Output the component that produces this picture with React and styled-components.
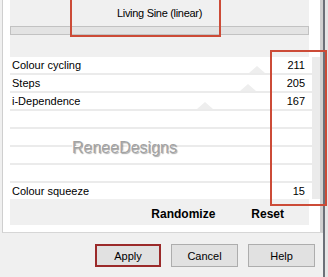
import React from 'react';
import styled, { createGlobalStyle } from 'styled-components';

const GlobalStyle = createGlobalStyle`
  html, body {
    margin: 0;
    padding: 0;
    background: #f0f0f0;
  }
  body {
    font-family: "Liberation Sans", Arial, sans-serif;
    font-size: 11px;
    color: #000;
  }
`;

const Screen = styled.div`
  position: relative;
  width: 328px;
  height: 277px;
  display: flex;
  overflow: hidden;
  background: #f0f0f0;
`;

const Main = styled.div`
  width: 323px;
  display: flex;
  flex-direction: column;
`;

const Edge = styled.div`
  width: 5px;
  background: linear-gradient(to right, #6c7078 0 2px, #e6e6e6 2px);
`;

const Frame = styled.div`
  height: 233px;
  box-sizing: border-box;
  margin-left: 2px;
  padding: 0 11px 7px 7px;
  background: #fff;
  border-left: 1px solid #cfcfcf;
  border-right: 3px solid #d0d0d0;
  border-bottom: 1px solid #d6d6d6;
`;

const Panel = styled.div`
  height: 225px;
  display: flex;
  flex-direction: column;
  background: #f0f0f0;
`;

const Title = styled.div`
  padding-top: 6px;
  line-height: 14px;
  text-align: center;
  letter-spacing: -0.3px;
`;

const Bar = styled.div`
  margin-top: 6px;
  height: 9px;
  box-sizing: border-box;
  border: 1px solid #c2c2c2;
  background: #e3e3e3;
`;

const List = styled.div`
  margin: 22px -11px 0 0;
  padding-right: 8px;
  display: flex;
  flex-direction: column;
  gap: 2px;
  background: #ebebeb;
`;

const Row = styled.div`
  position: relative;
  height: 16px;
  padding: 0 7px 0 2px;
  display: flex;
  align-items: center;
  justify-content: space-between;
  background: #fff;
  line-height: 16px;
`;

const Label = styled.span`
  position: relative;
`;

const Value = styled.span`
  position: relative;
`;

const Ghost = styled.span`
  position: absolute;
  bottom: 0;
  left: ${p => p.$x - 18}px;
  width: 0;
  height: 0;
  border-left: 8px solid transparent;
  border-right: 8px solid transparent;
  border-bottom: 7px solid #eeeeee;
`;

const Actions = styled.div`
  margin-top: 8px;
  padding-right: 25px;
  display: flex;
  justify-content: flex-end;
  gap: 36px;
  font-size: 12px;
  font-weight: bold;
  line-height: 14px;
`;

const Footer = styled.div`
  flex: 1;
  padding: 11px 8px 0 0;
  display: flex;
  justify-content: flex-end;
  align-items: flex-start;
  gap: 10px;
`;

const Button = styled.button`
  width: ${p => (p.$marked ? 66 : 67)}px;
  height: 23px;
  box-sizing: border-box;
  padding: 0;
  font-family: "Liberation Sans", Arial, sans-serif;
  font-size: 11px;
  color: #000;
  background: #e1e1e1;
  border: ${p => (p.$marked ? '2px solid #9b2a2a' : '1px solid #adadad')};
`;

const Watermark = styled.div`
  position: absolute;
  left: 72px;
  top: 139px;
  font-size: 16px;
  line-height: 18px;
  color: #a2a2a2;
  text-shadow: -1px -1px 0 #fff, 1px 1px 1px rgba(0, 0, 0, 0.35);
  pointer-events: none;
`;

const Marker = styled.div`
  position: absolute;
  box-sizing: border-box;
  border: 2px solid #cc4b37;
  left: ${p => p.$left}px;
  top: ${p => p.$top}px;
  width: ${p => p.$w}px;
  height: ${p => p.$h}px;
  pointer-events: none;
`;

const rows = [
  { label: 'Colour cycling', value: '211', ghost: 257 },
  { label: 'Steps', value: '205', ghost: 248 },
  { label: 'i-Dependence', value: '167', ghost: 205 },
  {},
  {},
  {},
  {},
  { label: 'Colour squeeze', value: '15' },
];

export default function App() {
  return (
    <>
      <GlobalStyle />
      <Screen>
        <Main>
          <Frame>
            <Panel>
              <Title>Living Sine (linear)</Title>
              <Bar />
              <List>
                {rows.map((row, i) => (
                  <Row key={i}>
                    {row.ghost && <Ghost $x={row.ghost} />}
                    <Label>{row.label}</Label>
                    <Value>{row.value}</Value>
                  </Row>
                ))}
              </List>
              <Actions>
                <span>Randomize</span>
                <span>Reset</span>
              </Actions>
            </Panel>
          </Frame>
          <Footer>
            <Button $marked>Apply</Button>
            <Button>Cancel</Button>
            <Button>Help</Button>
          </Footer>
        </Main>
        <Edge />
        <Watermark>ReneeDesigns</Watermark>
        <Marker $left={70} $top={-3} $w={151} $h={40} />
        <Marker $left={270} $top={50} $w={57} $h={156} />
      </Screen>
    </>
  );
}
